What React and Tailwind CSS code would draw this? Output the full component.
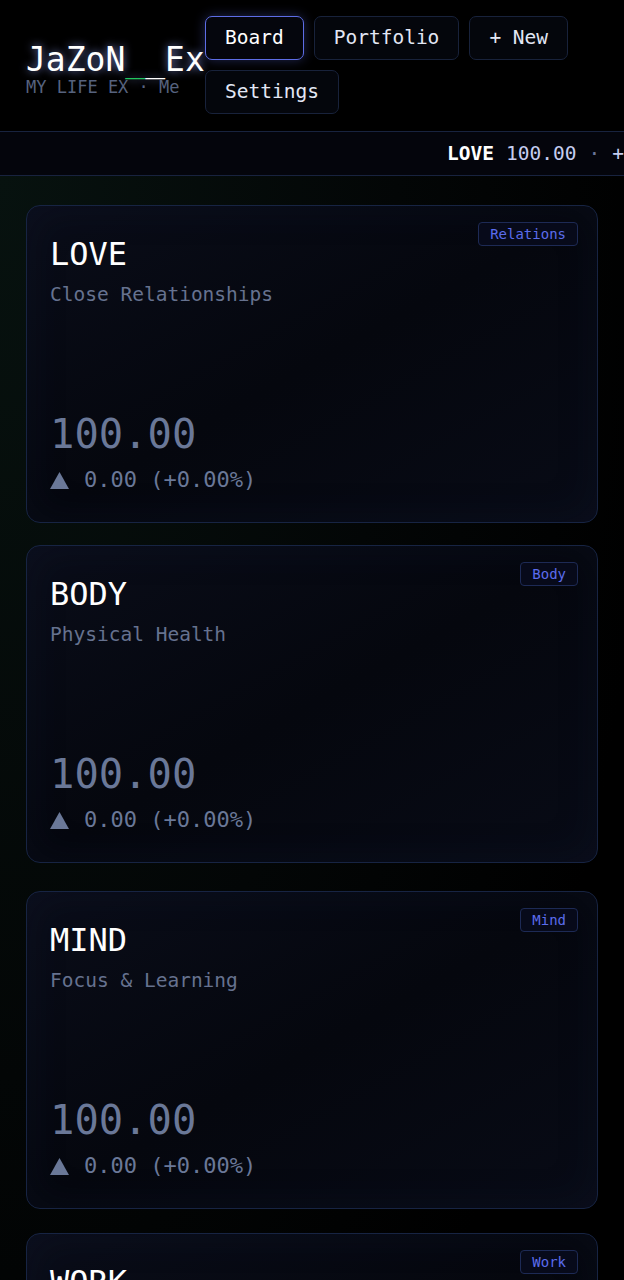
import { useState } from 'react'

const MONO = { fontFamily: '"DejaVu Sans Mono", "Liberation Mono", monospace' }

const NAV = ['Board', 'Portfolio', '+ New', 'Settings']

const CARDS = [
  { key: 'LOVE', name: 'Close Relationships', tag: 'Relations', gap: 'mt-0' },
  { key: 'BODY', name: 'Physical Health', tag: 'Body', gap: 'mt-[22px]' },
  { key: 'MIND', name: 'Focus & Learning', tag: 'Mind', gap: 'mt-[28px]' },
  { key: 'WORK', name: 'Career & Craft', tag: 'Work', gap: 'mt-[24px]' },
]

function StatCard({ card }) {
  return (
    <div
      className={`relative h-[318px] rounded-[14px] border border-[#172443] bg-gradient-to-br from-[#0a0d19] via-[#05070e] to-[#080b16] shadow-[inset_0_0_40px_rgba(20,30,60,0.2)] px-[23px] pt-[30px] ${card.gap}`}
    >
      <span className="absolute right-[19px] top-[16px] h-[24px] flex items-center rounded-[4px] border border-[#1d2a55] bg-[#070a1a] px-[11px] text-[14px] leading-none text-[#5b6cec]">
        {card.tag}
      </span>
      <div className="text-[32px] leading-[36px] text-white">{card.key}</div>
      <div className="mt-[11px] text-[19.5px] leading-[24px] text-[#66728f]">{card.name}</div>
      <div className="mt-[105px] text-[40.5px] leading-[44px] text-[#6a7898]">100.00</div>
      <div className="mt-[11px] flex items-center text-[22px] leading-[26px] text-[#6a7898]">
        <svg width="19" height="17" viewBox="0 0 19 17" className="shrink-0">
          <polygon points="9.5,0 19,17 0,17" fill="#6a7898" />
        </svg>
        <span className="ml-[15px]">0.00 (+0.00%)</span>
      </div>
    </div>
  )
}

export default function App() {
  const [active, setActive] = useState('Board')

  return (
    <div className="min-h-screen bg-black" style={MONO}>
      <header className="flex items-start bg-black px-[26px] pt-[16px] pb-[17px]">
        <div className="w-[179px] shrink-0 pt-[27px]">
          <div className="text-[33px] leading-[34px] text-white [text-shadow:0_0_8px_rgba(150,165,255,0.75)]">
            JaZoN<span className="text-[#22c55e]">_</span>_Ex
          </div>
          <div className="text-[17px] leading-[20px] text-[#56627e]">MY LIFE EX · Me</div>
        </div>
        <nav className="flex flex-wrap gap-[10px]">
          {NAV.map((item) => (
            <button
              key={item}
              onClick={() => setActive(item)}
              className={`h-[44px] rounded-[7px] border px-[19px] text-[19.5px] leading-none cursor-pointer ${
                active === item
                  ? 'border-[#5d6de6] bg-[#05060d] text-white shadow-[0_0_12px_rgba(93,109,230,0.35)]'
                  : 'border-[#18223b] bg-[#04060c] text-[#e3e7f5]'
              }`}
            >
              {item}
            </button>
          ))}
        </nav>
      </header>

      <div className="h-[45px] overflow-hidden whitespace-nowrap border-y border-[#18233f] bg-[#04050c] flex items-center pl-[447px] text-[19.5px]">
        <span className="font-bold text-white">LOVE</span>
        <span className="ml-[12px] text-[#c5cdf0]">100.00</span>
        <span className="ml-[12px] text-[#6b7699]">·</span>
        <span className="ml-[12px] text-[#c5cdf0]">+0.00%</span>
        <span className="ml-[24px] font-bold text-white">BODY</span>
        <span className="ml-[12px] text-[#c5cdf0]">100.00</span>
      </div>

      <main className="bg-[radial-gradient(ellipse_at_top_left,#07120f_0%,#030606_45%,#000_75%)] px-[26px] pt-[29px] pb-[40px]">
        {CARDS.map((card) => (
          <StatCard key={card.key} card={card} />
        ))}
      </main>
    </div>
  )
}
